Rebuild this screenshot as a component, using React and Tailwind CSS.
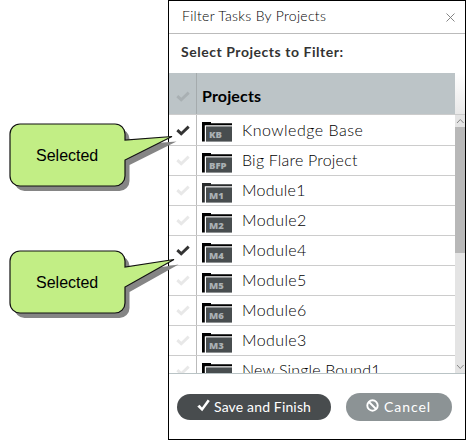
import React from "react";

const rows = [
  { code: "KB", name: "Knowledge Base", on: true, track: "tracking-[0.5px]" },
  { code: "BFP", name: "Big Flare Project", track: "tracking-[0.2px]" },
  { code: "M1", name: "Module1", track: "tracking-[0.25px]" },
  { code: "M2", name: "Module2", track: "tracking-[0.4px]" },
  { code: "M4", name: "Module4", on: true, track: "tracking-[0.4px]" },
  { code: "M5", name: "Module5", track: "tracking-[0.4px]" },
  { code: "M6", name: "Module6", track: "tracking-[0.4px]" },
  { code: "M3", name: "Module3", track: "tracking-[0.4px]" },
  { code: "NEW", name: "New Single Bound1", track: "tracking-[0.15px]" },
];

function Check({ className }) {
  return (
    <svg viewBox="0 0 14 11" className={className} fill="none" stroke="currentColor">
      <path d="M1.3 5.2 L5.2 8.7 L12.7 1.6" strokeWidth="2.9" />
    </svg>
  );
}

function Folder({ code }) {
  return (
    <div className="relative h-5 w-[30px] shrink-0">
      <svg viewBox="0 0 30 20" className="block h-5 w-[30px]">
        <path d="M0 0H9V1.3H30V3.2H2.8V19.5H0Z" fill={code === "M1" ? "#292b2c" : "#000"} />
        <rect x="4" y="4.4" width="26" height="15.2" fill="#484d4f" />
      </svg>
      <span className="absolute left-[7px] top-[7px] font-['Open_Sans',sans-serif] text-[9.5px] font-extrabold leading-[11px] text-[#aab0b3]">
        {code}
      </span>
    </div>
  );
}

function Callout({ className, body }) {
  return (
    <div className={`absolute left-0 h-[84px] w-[190px] ${className}`}>
      <svg viewBox="0 0 190 84" className="absolute inset-0 h-[84px] w-[190px]">
        <path d={body} fill="#858585" transform="translate(4.5 5)" />
        <path d={body} fill="#c2ee85" stroke="#111" strokeWidth="1.2" />
      </svg>
      <span className="absolute left-[36px] top-[32px] font-['Liberation_Sans',sans-serif] text-[16px] leading-[20px] text-black">
        Selected
      </span>
    </div>
  );
}

export default function App() {
  return (
    <div className="relative h-[440px] w-[466px] overflow-hidden bg-white pl-[168px] font-['Century_Gothic','URW_Gothic',Lato,sans-serif]">
      <div className="flex h-[440px] w-[298px] flex-col border border-black bg-white text-[#333]">
        <header className="flex h-[33px] shrink-0 items-center justify-between border-b border-[#bbb] pb-[3px] pl-[13px] pr-[10px]">
          <h1 className="whitespace-nowrap text-[14px] font-light leading-5 tracking-[0.3px] text-black">Filter Tasks By Projects</h1>
          <svg viewBox="0 0 9 9" className="mt-[3px] h-[9px] w-[9px]" stroke="#777" strokeWidth="0.9">
            <path d="M0.5 0.5L8.5 8.5M8.5 0.5L0.5 8.5" />
          </svg>
        </header>
        <div className="flex min-h-0 flex-1 flex-col">
          <div className="flex h-[39px] shrink-0 items-center pb-[4px] pl-[12px]">
            <h2 className="whitespace-nowrap text-[14px] font-bold leading-5 tracking-[0.54px]">Select Projects to Filter:</h2>
          </div>
          <div className="flex h-[42px] shrink-0 border-b border-[#ccc] bg-gradient-to-b from-white to-[#e8e8e8]">
            <div className="flex w-[28px] items-center justify-center border-r border-[#a5abad] bg-[#bcc4c7] pt-[5px]">
              <Check className="h-[11px] w-[14px] text-[#a9b0b3]" />
            </div>
            <div className="flex w-[258px] items-center bg-[#bcc4c7] pl-[5px] pt-[4px] text-[16px] font-bold tracking-[0.15px] text-black">
              <span>Projects</span>
            </div>
          </div>
          <div className="flex h-[259px] shrink-0 border-b border-[#b9c3c5]">
            <div className="h-full w-[286px] overflow-hidden">
              {rows.map((r) => (
                <div key={r.name} className="flex h-[30px] border-b border-[#ccc] pb-px first:h-[31px]">
                  <div className="-mb-px flex w-[28px] items-center justify-center border-r border-[#bbb]">
                    <Check className={r.on ? "h-[11px] w-[14px] text-[#333]" : "h-[11px] w-[14px] text-[#e8e8e8]"} />
                  </div>
                  <div className="flex items-center pl-[5px]">
                    <div className="pt-[5px]"><Folder code={r.code} /></div>
                    <span className={`whitespace-nowrap pl-[10px] text-[16px] font-light leading-5 text-black ${r.track}`}>{r.name}</span>
                  </div>
                </div>
              ))}
            </div>
            <div className="flex w-[10px] flex-col bg-[#e4e4e4]">
              <svg viewBox="0 0 10 12" className="h-[12px] w-[10px]" fill="none" stroke="#888">
                <path d="M2 8L5.3 4.5L8.6 8" />
              </svg>
              <div className="h-[126px] bg-[#b8b8b8]" />
              <svg viewBox="0 0 10 12" className="mt-auto h-[12px] w-[10px]" fill="none" stroke="#888">
                <path d="M2 4L5.3 7.5L8.6 4" />
              </svg>
            </div>
          </div>
          <footer className="flex flex-1 items-center gap-[15px] pl-2 text-white">
            <button className="flex h-[26px] w-[154px] items-center rounded-full bg-[#484c4e] pl-[20px] text-[14px]">
              <svg viewBox="0 0 13 13" className="mb-[2px] mr-[4px] h-[13px] w-[13px] shrink-0" fill="white">
                <path d="M0.3 7.6L2.6 5.8L5 8.6L10.7 0.6L12.8 2L5.2 12.2Z" />
              </svg>
              <span className="whitespace-nowrap leading-5 tracking-[0.15px]">Save and Finish</span>
            </button>
            <button className="flex h-[28px] w-[106px] items-center rounded-full bg-[#8c9395] pl-[20px] text-[14px]">
              <svg viewBox="0 0 13 13" className="mb-[3px] mr-[5px] h-[13px] w-[13px] shrink-0" fill="none" stroke="white" strokeWidth="1.9">
                <circle cx="6.5" cy="6.5" r="5.2" />
                <path d="M3 3L10 10" />
              </svg>
              <span className="whitespace-nowrap leading-5 tracking-[0.95px]">Cancel</span>
            </button>
          </footer>
        </div>
      </div>
      <Callout
        className="top-[114px]"
        body="M20 10H115A10 10 0 0 1 125 20V26L172 22.5L125 46V62A10 10 0 0 1 115 72H20A10 10 0 0 1 10 62V20A10 10 0 0 1 20 10Z"
      />
      <Callout
        className="top-[241px]"
        body="M20 10H115A10 10 0 0 1 125 20V26L174 18.5L125 46V62A10 10 0 0 1 115 72H20A10 10 0 0 1 10 62V20A10 10 0 0 1 20 10Z"
      />
    </div>
  );
}
